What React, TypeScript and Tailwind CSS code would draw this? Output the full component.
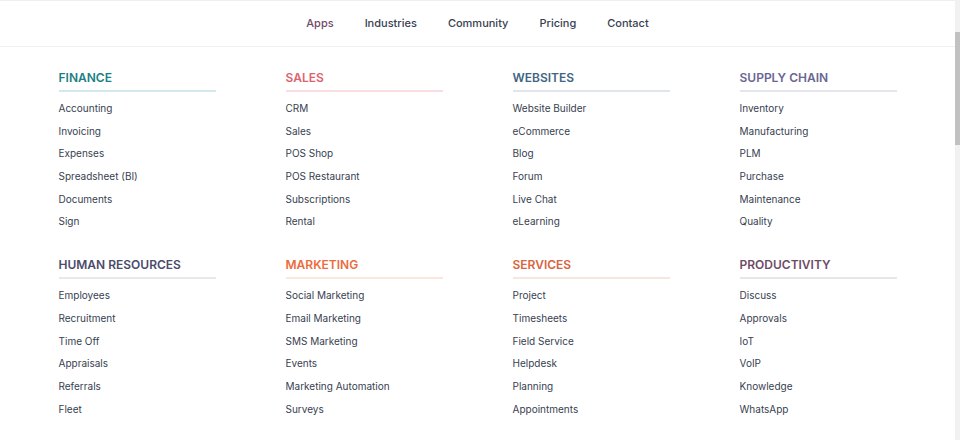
import React from "react";

type Section = {
  title: string;
  titleClass: string;
  lineClass: string;
  items: string[];
};

const sections: Section[] = [
  {
    title: "Finance",
    titleClass: "text-[#1b7f86]",
    lineClass: "bg-[#d3e9eb]",
    items: ["Accounting", "Invoicing", "Expenses", "Spreadsheet (BI)", "Documents", "Sign"],
  },
  {
    title: "Sales",
    titleClass: "text-[#dc6470]",
    lineClass: "bg-[#f9dde1]",
    items: ["CRM", "Sales", "POS Shop", "POS Restaurant", "Subscriptions", "Rental"],
  },
  {
    title: "Websites",
    titleClass: "text-[#3f6584]",
    lineClass: "bg-[#e1e6ec]",
    items: ["Website Builder", "eCommerce", "Blog", "Forum", "Live Chat", "eLearning"],
  },
  {
    title: "Supply Chain",
    titleClass: "text-[#6a6694]",
    lineClass: "bg-[#e5e5ec]",
    items: ["Inventory", "Manufacturing", "PLM", "Purchase", "Maintenance", "Quality"],
  },
  {
    title: "Human Resources",
    titleClass: "text-[#4b4b6b]",
    lineClass: "bg-[#e7e7ec]",
    items: ["Employees", "Recruitment", "Time Off", "Appraisals", "Referrals", "Fleet"],
  },
  {
    title: "Marketing",
    titleClass: "text-[#ec6b3d]",
    lineClass: "bg-[#fbe7de]",
    items: ["Social Marketing", "Email Marketing", "SMS Marketing", "Events", "Marketing Automation", "Surveys"],
  },
  {
    title: "Services",
    titleClass: "text-[#d9643d]",
    lineClass: "bg-[#f4e6e1]",
    items: ["Project", "Timesheets", "Field Service", "Helpdesk", "Planning", "Appointments"],
  },
  {
    title: "Productivity",
    titleClass: "text-[#6d4b67]",
    lineClass: "bg-[#e8e6ea]",
    items: ["Discuss", "Approvals", "IoT", "VoIP", "Knowledge", "WhatsApp"],
  },
];

const navItems = ["Apps", "Industries", "Community", "Pricing", "Contact"];

export default function App() {
  return (
    <div className="relative h-[440px] w-[960px] overflow-hidden bg-white font-['Inter','Liberation_Sans',sans-serif] antialiased">
      {/* fake overlay scrollbar */}
      <div className="absolute right-0 top-0 h-full w-[5px] bg-[#f1f1f1]">
        <div className="mt-[32px] h-[113px] w-full bg-[#c1c1c1]" />
      </div>

      <div className="w-[955px]">
        <header className="flex h-[47px] items-center justify-center gap-[31px] border-y border-[#efefef]">
          {navItems.map((n, i) => (
            <a
              key={n}
              className={`text-[11px] font-medium ${i === 0 ? "text-[#714b67]" : "text-[#374151]"}`}
            >
              {n}
            </a>
          ))}
        </header>

        <div className="mx-auto grid w-[838px] grid-cols-4 gap-x-[70px] gap-y-[23px] pt-[22px]">
          {sections.map((s) => (
            <div key={s.title}>
              <h3 className={`text-[12px] font-semibold uppercase leading-[18px] ${s.titleClass}`}>
                {s.title}
              </h3>
              <div className={`mt-[3px] h-[2px] w-[157px] ${s.lineClass}`} />
              <ul className="mt-[5px] flex flex-col">
                {s.items.map((it) => (
                  <li key={it} className="h-[22.7px] text-[10px] leading-[22.7px] text-[#374151]">
                    {it}
                  </li>
                ))}
              </ul>
            </div>
          ))}
        </div>
      </div>
    </div>
  );
}
